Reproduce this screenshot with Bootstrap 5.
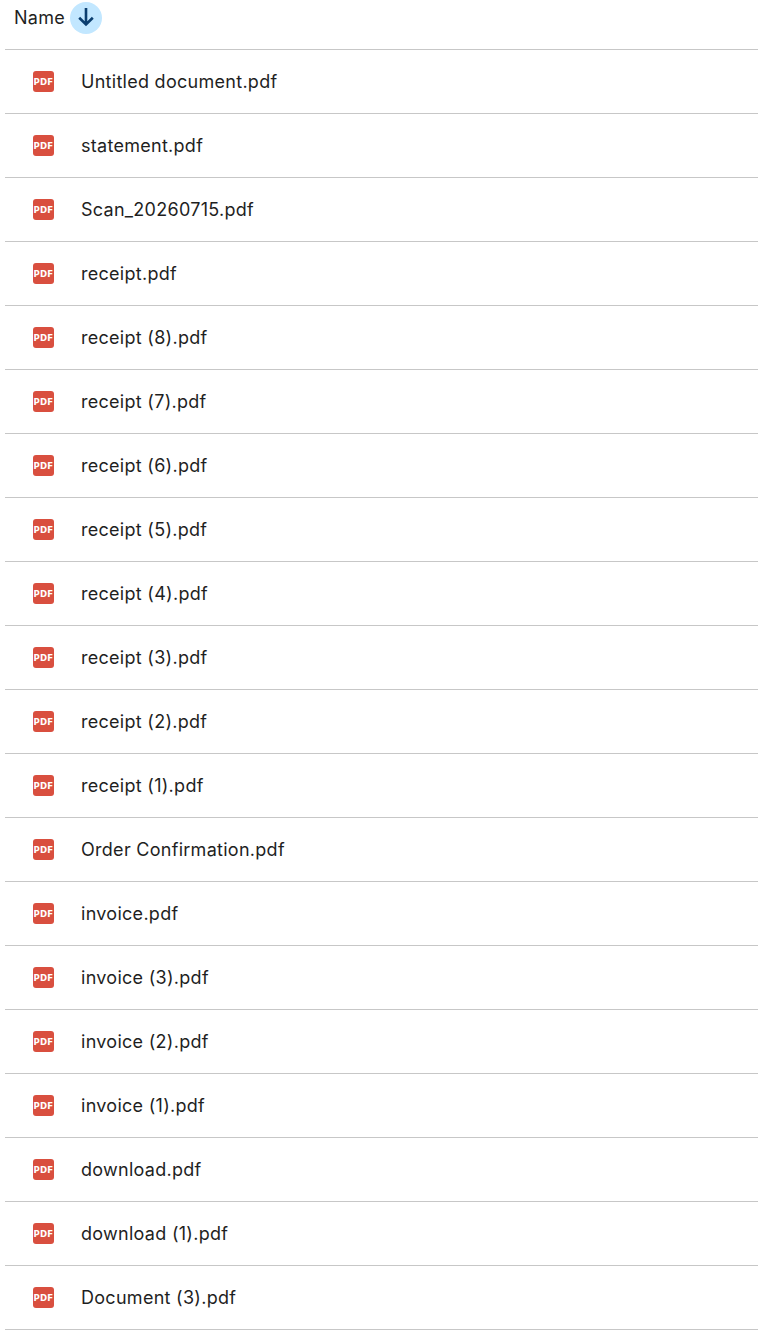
<!DOCTYPE html>
<html lang="en"><head><meta charset="utf-8"><title>Files</title>
<link href="https://cdn.jsdelivr.net/npm/bootstrap@5.3.0/dist/css/bootstrap.min.css" rel="stylesheet">
<style>
html,body{background:#fff;overflow:hidden}
.file-list{margin-left:5px;font-family:Inter,"Liberation Sans",sans-serif;color:#1f1f1f;font-size:18px;line-height:24px;letter-spacing:.28px}
.head-row{height:50px;border-bottom:1px solid #c7c7c7;padding-left:9px;padding-bottom:13px}
.head-name{margin-right:5px}
.sort-btn{width:32px;height:32px;border-radius:50%;background:#c2e7ff;color:#0b3e6f;border:0;padding:0}
.file-row{height:64px;border-bottom:1px solid #c7c7c7;padding-left:28px}
.pdf-ico{width:21px;height:21px;border-radius:3px;background:#d94f3f;color:#fff;font:700 9.500px/21px "DejaVu Sans Condensed","Liberation Sans",sans-serif;text-align:center;margin-right:27px;letter-spacing:.2px}
</style></head><body>
<div class="file-list">
<div class="head-row d-flex align-items-center"><span class="head-name">Name</span><button class="sort-btn d-flex align-items-center justify-content-center" aria-label="Sort"><svg width="20" height="20" viewBox="0 0 20 20" fill="none" stroke="currentColor" stroke-width="2.6"><path d="M10 0V16.500M3.200 9.800 10 16.500l6.800-6.700"/></svg></button></div>
<div class="file-row d-flex align-items-center"><span class="pdf-ico">PDF</span>Untitled document.pdf</div>
<div class="file-row d-flex align-items-center"><span class="pdf-ico">PDF</span>statement.pdf</div>
<div class="file-row d-flex align-items-center"><span class="pdf-ico">PDF</span>Scan_20260715.pdf</div>
<div class="file-row d-flex align-items-center"><span class="pdf-ico">PDF</span>receipt.pdf</div>
<div class="file-row d-flex align-items-center"><span class="pdf-ico">PDF</span>receipt (8).pdf</div>
<div class="file-row d-flex align-items-center"><span class="pdf-ico">PDF</span>receipt (7).pdf</div>
<div class="file-row d-flex align-items-center"><span class="pdf-ico">PDF</span>receipt (6).pdf</div>
<div class="file-row d-flex align-items-center"><span class="pdf-ico">PDF</span>receipt (5).pdf</div>
<div class="file-row d-flex align-items-center"><span class="pdf-ico">PDF</span>receipt (4).pdf</div>
<div class="file-row d-flex align-items-center"><span class="pdf-ico">PDF</span>receipt (3).pdf</div>
<div class="file-row d-flex align-items-center"><span class="pdf-ico">PDF</span>receipt (2).pdf</div>
<div class="file-row d-flex align-items-center"><span class="pdf-ico">PDF</span>receipt (1).pdf</div>
<div class="file-row d-flex align-items-center"><span class="pdf-ico">PDF</span>Order Confirmation.pdf</div>
<div class="file-row d-flex align-items-center"><span class="pdf-ico">PDF</span>invoice.pdf</div>
<div class="file-row d-flex align-items-center"><span class="pdf-ico">PDF</span>invoice (3).pdf</div>
<div class="file-row d-flex align-items-center"><span class="pdf-ico">PDF</span>invoice (2).pdf</div>
<div class="file-row d-flex align-items-center"><span class="pdf-ico">PDF</span>invoice (1).pdf</div>
<div class="file-row d-flex align-items-center"><span class="pdf-ico">PDF</span>download.pdf</div>
<div class="file-row d-flex align-items-center"><span class="pdf-ico">PDF</span>download (1).pdf</div>
<div class="file-row d-flex align-items-center"><span class="pdf-ico">PDF</span>Document (3).pdf</div>
</div>
</body></html>
